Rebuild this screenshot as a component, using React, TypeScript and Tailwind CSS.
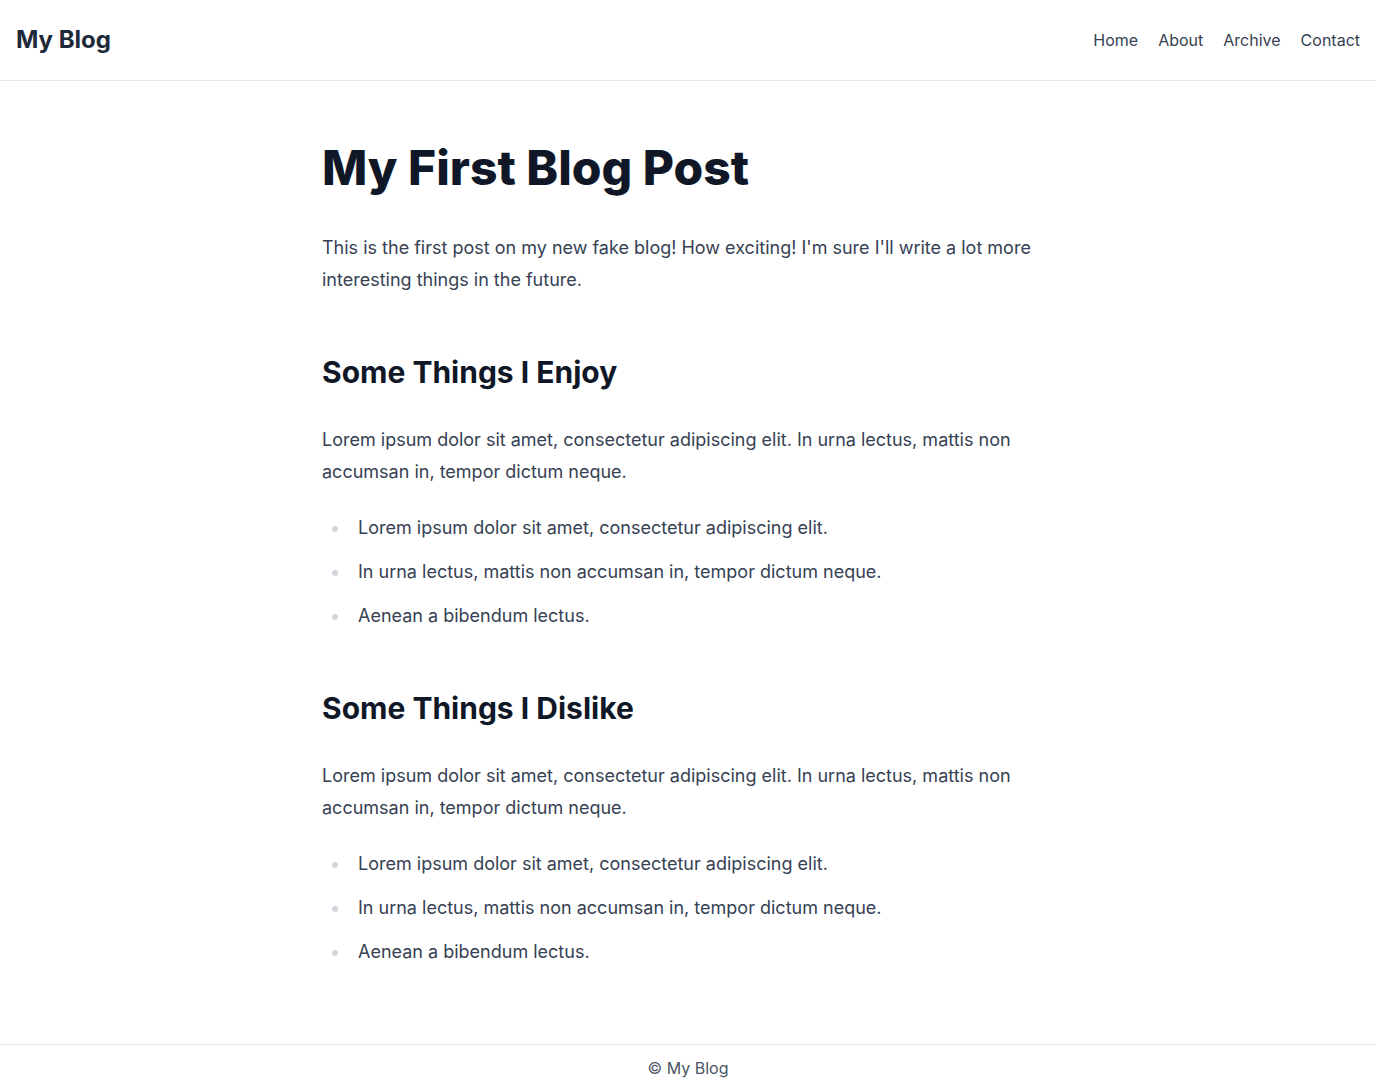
import * as React from 'react';

const font = { fontFamily: 'Inter, "Noto Sans", sans-serif' };

const items = [
    'Lorem ipsum dolor sit amet, consectetur adipiscing elit.',
    'In urna lectus, mattis non accumsan in, tempor dictum neque.',
    'Aenean a bibendum lectus.',
];

const Section: React.FC<{ title: string }> = ({ title }) => {
    return (
        <>
            <h2 className="mt-14 mb-8 text-[30px] leading-10 font-bold text-gray-900">{title}</h2>
            <p className="my-6">
                Lorem ipsum dolor sit amet, consectetur adipiscing elit. In urna lectus, mattis non accumsan in, tempor dictum neque.
            </p>
            <ul className="my-6 pl-7 list-disc marker:text-gray-300">
                {items.map((item) => (
                    <li key={item} className="my-3 pl-2">{item}</li>
                ))}
            </ul>
        </>
    );
};

export default function App() {
    return (
        <div style={font} className="bg-white">
            <header className="h-[81px] flex items-center justify-between px-4 border-b border-gray-200">
                <a href="#" className="text-2xl font-bold text-gray-800">My Blog</a>
                <nav className="flex gap-5 text-base text-gray-700">
                    <a href="#">Home</a>
                    <a href="#">About</a>
                    <a href="#">Archive</a>
                    <a href="#">Contact</a>
                </nav>
            </header>

            <main className="pt-[63px] pb-16">
                <article className="mx-auto w-[732px] text-lg leading-8 text-gray-700">
                    <h1 className="mb-10 text-5xl leading-none font-extrabold text-gray-900">My First Blog Post</h1>
                    <p className="my-6">
                        This is the first post on my new fake blog! How exciting! I'm sure I'll write a lot more interesting things in the future.
                    </p>
                    <Section title="Some Things I Enjoy" />
                    <div className="[&>ul]:mb-0">
                        <Section title="Some Things I Dislike" />
                    </div>
                </article>
            </main>

            <footer className="border-t border-gray-200 py-[11px] text-center text-base text-gray-600">
                © My Blog
            </footer>
        </div>
    );
}
